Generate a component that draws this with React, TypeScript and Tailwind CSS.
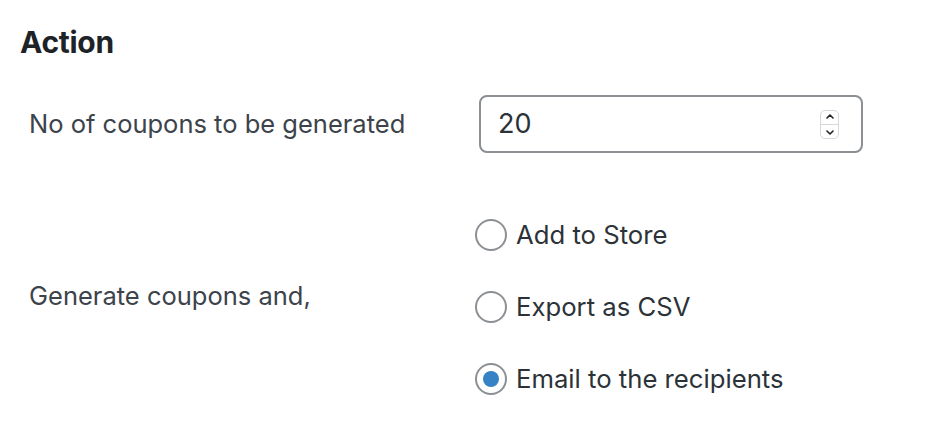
import { useState } from 'react'

const options = ['Add to Store', 'Export as CSV', 'Email to the recipients']

export default function App() {
  const [choice, setChoice] = useState(2)

  return (
    <div className="w-[950px] h-[426px] bg-white text-[#3c434a] font-['Inter','Liberation_Sans',sans-serif] overflow-hidden">
      <h2 className="pl-[20px] pt-[22px] text-[30px] leading-[40px] font-bold text-[#1d2327] tracking-[-0.3px]">Action</h2>

      <div className="flex items-center mt-[33px] h-[58px]">
        <label className="w-[479px] pl-[29px] text-[25.5px]">No of coupons to be generated</label>
        <div className="w-[384px] h-[58px] border-2 border-[#8c8f94] rounded-[8px] flex items-center pl-[17px] pr-[22px]">
          <span className="flex-1 text-[27px] text-[#2c3338]">20</span>
          <div className="w-[19px] h-[29px] rounded-[5px] border border-[#d8d8d8] flex flex-col items-center justify-between py-[2px]">
            <svg viewBox="0 0 10 6" className="w-[10px] h-[6px]" fill="none" stroke="#222" strokeWidth={1.6} strokeLinecap="round" strokeLinejoin="round">
              <path d="M2 5l3-3 3 3" />
            </svg>
            <div className="w-full h-px bg-[#d8d8d8]" />
            <svg viewBox="0 0 10 6" className="w-[10px] h-[6px]" fill="none" stroke="#222" strokeWidth={1.6} strokeLinecap="round" strokeLinejoin="round">
              <path d="M2 1l3 3 3-3" />
            </svg>
          </div>
        </div>
      </div>

      <div className="flex items-center mt-[66px]">
        <label className="w-[475px] pl-[29px] text-[25.5px] -mt-[22px]">Generate coupons and,</label>
        <div className="flex flex-col gap-[40px]">
          {options.map((o, i) => (
            <button key={o} onClick={() => setChoice(i)} className="flex items-center gap-[9px] h-[32px] text-[25.7px] text-[#2c3338]">
              <span className="w-[32px] h-[32px] rounded-full border-2 border-[#8c8f94] flex items-center justify-center">
                {choice === i && <span className="w-[16px] h-[16px] rounded-full bg-[#3582c4]" />}
              </span>
              {o}
            </button>
          ))}
        </div>
      </div>
    </div>
  )
}
